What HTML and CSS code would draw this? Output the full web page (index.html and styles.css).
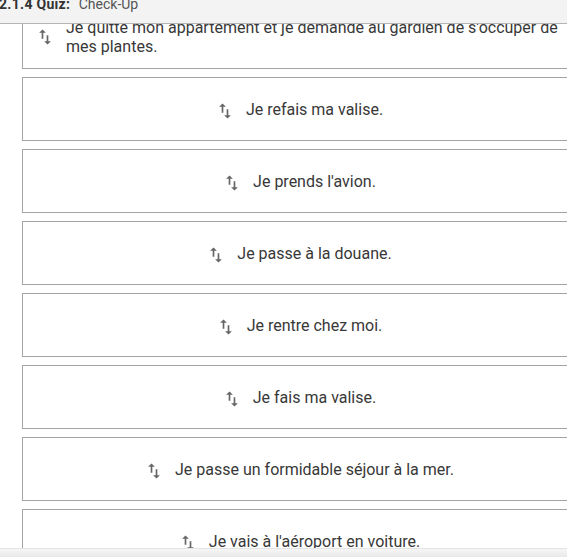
FILE: index.html
```html
<!DOCTYPE html>
<html lang="fr">
<head>
  <meta charset="UTF-8" />
  <meta name="viewport" content="width=device-width,initial-scale=1" />
  <title>2.1.4 Quiz: Check-Up</title>
  <link rel="stylesheet" href="styles.css">
</head>
<body>
  <div class="topbar">
    <span class="crumb"><b>2.1.4 Quiz:</b> Check-Up</span>
  </div>

  <ul class="order-list">
    <li class="order-item wide">
      <svg class="swap" viewBox="0 0 24 24"><path d="M16 17.01V10h-2v7.01h-3L15 21l4-3.99h-3zM9 3L5 6.99h3V14h2V6.99h3L9 3z"/></svg>
      <span>Je quitte mon appartement et je demande au gardien de s'occuper de mes plantes.</span>
    </li>
    <li class="order-item">
      <svg class="swap" viewBox="0 0 24 24"><path d="M16 17.01V10h-2v7.01h-3L15 21l4-3.99h-3zM9 3L5 6.99h3V14h2V6.99h3L9 3z"/></svg>
      <span>Je refais ma valise.</span>
    </li>
    <li class="order-item">
      <svg class="swap" viewBox="0 0 24 24"><path d="M16 17.01V10h-2v7.01h-3L15 21l4-3.99h-3zM9 3L5 6.99h3V14h2V6.99h3L9 3z"/></svg>
      <span>Je prends l'avion.</span>
    </li>
    <li class="order-item">
      <svg class="swap" viewBox="0 0 24 24"><path d="M16 17.01V10h-2v7.01h-3L15 21l4-3.99h-3zM9 3L5 6.99h3V14h2V6.99h3L9 3z"/></svg>
      <span>Je passe à la douane.</span>
    </li>
    <li class="order-item">
      <svg class="swap" viewBox="0 0 24 24"><path d="M16 17.01V10h-2v7.01h-3L15 21l4-3.99h-3zM9 3L5 6.99h3V14h2V6.99h3L9 3z"/></svg>
      <span>Je rentre chez moi.</span>
    </li>
    <li class="order-item">
      <svg class="swap" viewBox="0 0 24 24"><path d="M16 17.01V10h-2v7.01h-3L15 21l4-3.99h-3zM9 3L5 6.99h3V14h2V6.99h3L9 3z"/></svg>
      <span>Je fais ma valise.</span>
    </li>
    <li class="order-item">
      <svg class="swap" viewBox="0 0 24 24"><path d="M16 17.01V10h-2v7.01h-3L15 21l4-3.99h-3zM9 3L5 6.99h3V14h2V6.99h3L9 3z"/></svg>
      <span>Je passe un formidable séjour à la mer.</span>
    </li>
    <li class="order-item">
      <svg class="swap" viewBox="0 0 24 24"><path d="M16 17.01V10h-2v7.01h-3L15 21l4-3.99h-3zM9 3L5 6.99h3V14h2V6.99h3L9 3z"/></svg>
      <span>Je vais à l'aéroport en voiture.</span>
    </li>
  </ul>

  <div class="bottombar"></div>
</body>
</html>
```

FILE: styles.css
```css
/* Общие */
html, body { margin: 0; padding: 0; height: 100%; overflow: hidden; }
body { background: #fff; font-family: Roboto, "Liberation Sans", Arial, sans-serif; color: #333; }

/* Шапка поверх списка */
.topbar { position: fixed; top: 0; left: 0; right: 0; height: 23px; background: #f3f3f3; border-bottom: 1px solid #b5b5b5; z-index: 2; overflow: hidden; }
.topbar .crumb { display: block; margin: -6px 0 0 -1px; font-size: 14px; line-height: 20px; color: #555; white-space: nowrap; }
.topbar .crumb b { color: #333; margin-right: 5px; letter-spacing: 0.3px; }

/* Список для сортировки */
.order-list { list-style: none; margin: 5px 0 0 22px; padding: 0; width: 554px; display: flex; flex-direction: column; gap: 8px; }
.order-item { box-sizing: border-box; min-height: 64px; display: flex; align-items: center; justify-content: center; padding: 12px; border: 1px solid #a3a3a3; background: #fff; font-size: 16px; line-height: 19px; color: #383838; }
.order-item.wide { justify-content: flex-start; }
.order-item .swap { width: 20px; height: 20px; flex: 0 0 20px; fill: #666; margin-right: 11px; position: relative; top: 2px; }
.order-item.wide .swap { top: 0; }

/* Нижняя полоса */
.bottombar { position: fixed; left: 0; right: 0; bottom: 0; height: 8px; background: linear-gradient(#f6f6f6, #e9e9e9); border-top: 1px solid #e4e4e4; z-index: 2; }
```
